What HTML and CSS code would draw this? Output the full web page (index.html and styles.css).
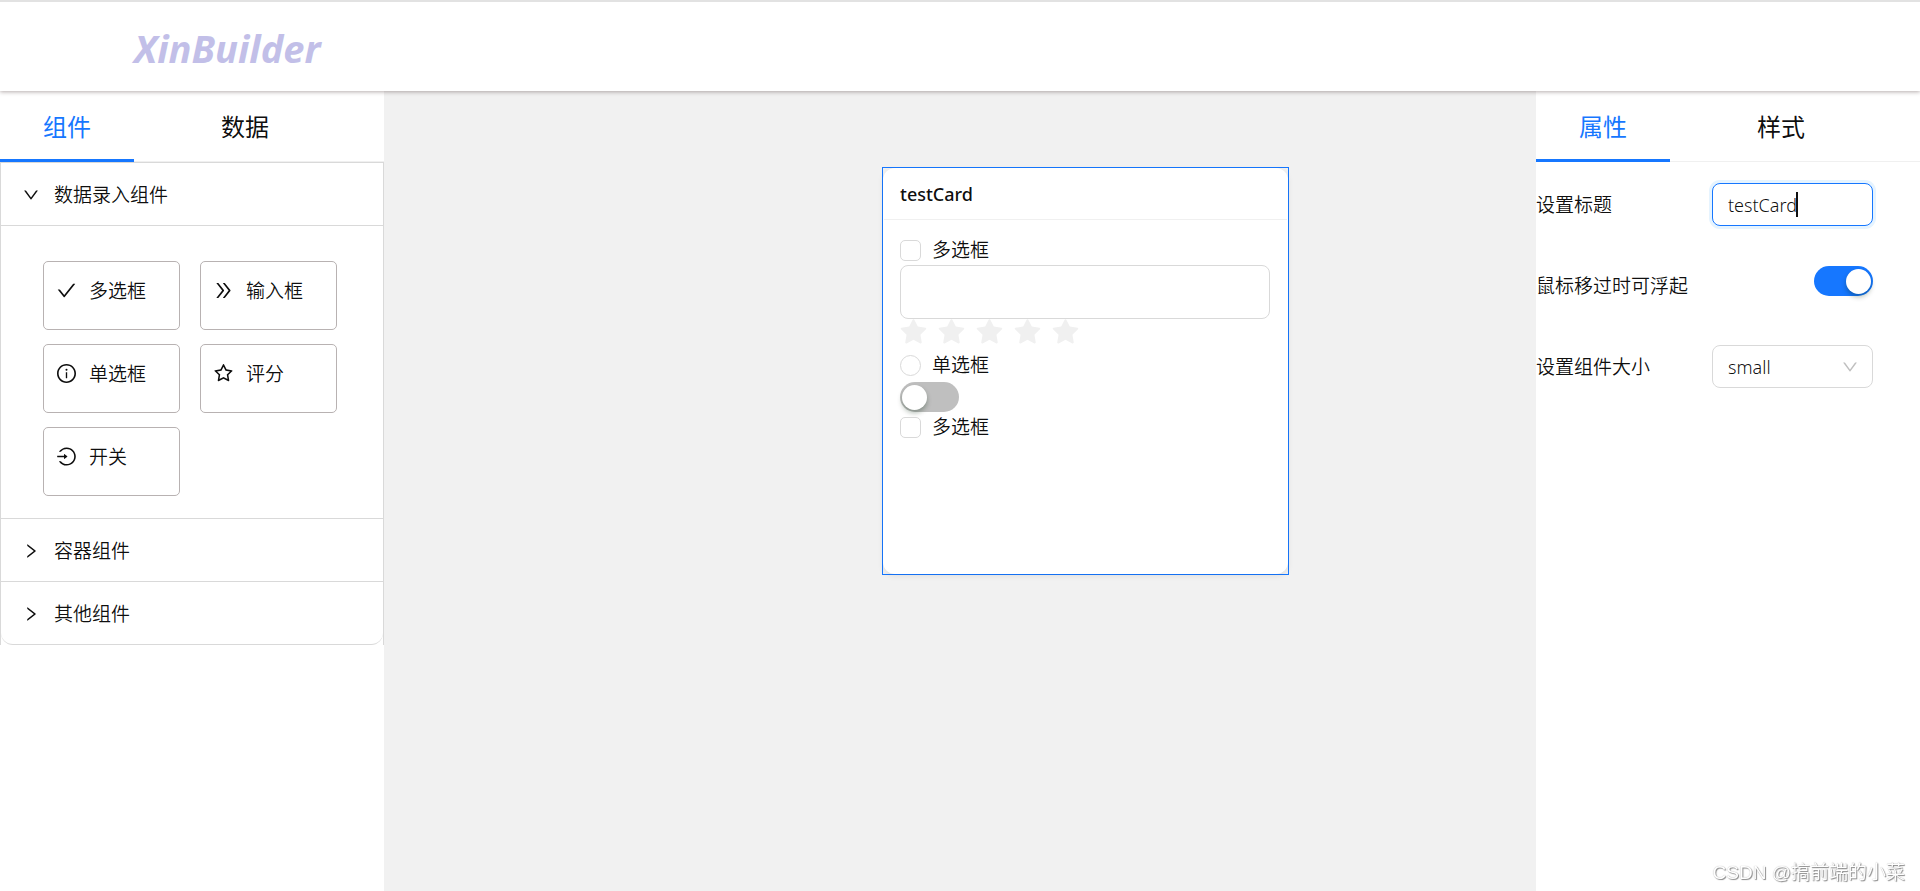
FILE: index.html
```html
<!DOCTYPE html>
<html lang="zh-CN">
<head>
<meta charset="utf-8">
<title>XinBuilder</title>
<link rel="stylesheet" href="styles.css">
</head>
<body>
<svg class="sprite" aria-hidden="true">
  <symbol id="i-check" viewBox="64 64 896 896"><path d="M912 190h-69.9c-9.8 0-19.1 4.5-25.1 12.2L404.7 724.5 207 474a32 32 0 00-25.1-12.2H112c-6.7 0-10.4 7.7-6.3 12.9l273.9 347c12.8 16.2 37.4 16.2 50.3 0l488.4-618.9c4.1-5.1.4-12.8-6.3-12.8z"/></symbol>
  <symbol id="i-double-right" viewBox="64 64 896 896"><path d="M533.2 492.3L277.9 166.1c-3-3.9-7.7-6.1-12.6-6.1H188c-6.7 0-10.4 7.7-6.3 12.9L447.1 512 181.7 851.1A7.98 7.98 0 00188 864h77.3c4.9 0 9.6-2.3 12.6-6.1l255.3-326.1c9.1-11.7 9.1-27.9 0-39.5zm304 0L581.9 166.1c-3-3.9-7.7-6.1-12.6-6.1H492c-6.7 0-10.4 7.7-6.3 12.9L751.1 512 485.7 851.1A7.98 7.98 0 00492 864h77.3c4.9 0 9.6-2.3 12.6-6.1l255.3-326.1c9.1-11.7 9.1-27.9 0-39.5z"/></symbol>
  <symbol id="i-info" viewBox="64 64 896 896"><path d="M512 64C264.6 64 64 264.6 64 512s200.6 448 448 448 448-200.6 448-448S759.4 64 512 64zm0 820c-205.4 0-372-166.6-372-372s166.6-372 372-372 372 166.6 372 372-166.6 372-372 372z"/><path d="M464 336a48 48 0 1096 0 48 48 0 10-96 0zm72 112h-48c-4.4 0-8 3.6-8 8v272c0 4.4 3.6 8 8 8h48c4.4 0 8-3.6 8-8V456c0-4.4-3.6-8-8-8z"/></symbol>
  <symbol id="i-star" viewBox="64 64 896 896"><path d="M908.1 353.1l-253.9-36.9L540.7 86.1c-3.1-6.3-8.2-11.4-14.5-14.5-15.8-7.8-35-1.3-42.9 14.5L369.8 316.2l-253.9 36.9c-7 1-13.4 4.3-18.3 9.3a32.05 32.05 0 00.6 45.3l183.7 179.1-43.4 252.9a31.95 31.95 0 0046.4 33.7L512 754l227.1 119.4c6.2 3.3 13.4 4.4 20.3 3.2 17.4-3 29.1-19.5 26.1-36.9l-43.4-252.9 183.7-179.1c5-4.9 8.3-11.3 9.3-18.3 2.7-17.5-9.5-33.7-27-36.3zM664.8 561.6l36.1 210.3L512 672.7 323.1 772l36.1-210.3-152.8-149L417.6 382 512 190.7 606.4 382l211.2 30.7-152.8 148.9z"/></symbol>
  <symbol id="i-star-filled" viewBox="64 64 896 896"><path d="M908.1 353.1l-253.9-36.9L540.7 86.1c-3.1-6.3-8.2-11.4-14.5-14.5-15.8-7.8-35-1.3-42.9 14.5L369.8 316.2l-253.9 36.9c-7 1-13.4 4.3-18.3 9.3a32.05 32.05 0 00.6 45.3l183.7 179.1-43.4 252.9a31.95 31.95 0 0046.4 33.7L512 754l227.1 119.4c6.2 3.3 13.4 4.4 20.3 3.2 17.4-3 29.1-19.5 26.1-36.9l-43.4-252.9 183.7-179.1c5-4.9 8.3-11.3 9.3-18.3 2.7-17.5-9.5-33.7-27-36.3z"/></symbol>
  <symbol id="i-login" viewBox="64 64 896 896"><path d="M521.7 82c-152.5-.4-286.7 78.5-363.4 197.7-3.4 5.3.4 12.3 6.7 12.3h70.3c4.8 0 9.3-2.1 12.3-5.8 7-8.5 14.5-16.7 22.4-24.5 32.6-32.5 70.5-58.1 112.7-75.9 43.6-18.4 90-27.8 137.9-27.8 47.9 0 94.3 9.3 137.9 27.8 42.2 17.8 80.1 43.4 112.7 75.9 32.6 32.5 58.1 70.4 76 112.5C865.7 417.8 875 464.1 875 512c0 47.9-9.4 94.2-27.8 137.8-17.8 42.1-43.4 80-76 112.5s-70.5 58.1-112.7 75.9A352.8 352.8 0 01520.6 866c-47.9 0-94.3-9.4-137.9-27.8A353.84 353.84 0 01270 762.3c-7.9-7.9-15.3-16.1-22.4-24.5-3-3.7-7.6-5.8-12.3-5.8H165c-6.3 0-10.2 7-6.7 12.3C234.9 863.2 368.5 942 520.6 942c236.2 0 428-190.1 430.4-425.6C953.4 277.1 761.3 82.6 521.7 82zM395.02 624v-76h-314c-4.4 0-8-3.6-8-8v-56c0-4.4 3.6-8 8-8h314v-76c0-6.7 7.8-10.5 13-6.3l141.9 112a8 8 0 010 12.6l-141.9 112c-5.2 4.1-13 .3-13-6.3z"/></symbol>
  <symbol id="i-down" viewBox="64 64 896 896"><path d="M884 256h-75c-5.1 0-9.9 2.5-12.9 6.6L512 654.2 227.9 262.6c-3-4.1-7.8-6.6-12.9-6.6h-75c-6.5 0-10.3 7.4-6.5 12.7l352.6 486.1c12.8 17.6 39 17.6 51.7 0l352.6-486.1c3.9-5.3.1-12.7-6.4-12.7z"/></symbol>
  <symbol id="i-right" viewBox="64 64 896 896"><path d="M765.7 486.8L314.9 134.7A7.97 7.97 0 00302 141v77.3c0 4.9 2.3 9.6 6.1 12.6l360 281.1-360 281.1c-3.9 3-6.1 7.7-6.1 12.6V883c0 6.7 7.7 10.4 12.9 6.3l450.8-352.1a31.96 31.96 0 000-50.4z"/></symbol>
</svg>

<header class="topbar"><h1 class="logo">XinBuilder</h1></header>

<div class="workspace">
  <aside class="panel">
    <nav class="tabs">
      <button class="tab tab-active" type="button">组件</button>
      <button class="tab" type="button">数据</button>
    </nav>
    <div class="collapse">
      <section class="group">
        <button class="group-head" type="button"><svg class="chevron"><use href="#i-down"/></svg>数据录入组件</button>
        <div class="palette">
          <button class="item" type="button"><svg class="icon"><use href="#i-check"/></svg>多选框</button>
          <button class="item" type="button"><svg class="icon"><use href="#i-double-right"/></svg>输入框</button>
          <button class="item" type="button"><svg class="icon"><use href="#i-info"/></svg>单选框</button>
          <button class="item" type="button"><svg class="icon"><use href="#i-star"/></svg>评分</button>
          <button class="item" type="button"><svg class="icon"><use href="#i-login"/></svg>开关</button>
        </div>
      </section>
      <section class="group">
        <button class="group-head" type="button"><svg class="chevron"><use href="#i-right"/></svg>容器组件</button>
      </section>
      <section class="group">
        <button class="group-head" type="button"><svg class="chevron"><use href="#i-right"/></svg>其他组件</button>
      </section>
    </div>
  </aside>

  <main class="canvas">
    <div class="selection">
      <article class="card">
        <h2 class="card-title">testCard</h2>
        <div class="card-body">
          <label class="choice"><input class="box" type="checkbox">多选框</label>
          <input class="text-input" type="text" aria-label="输入框">
          <div class="rate">
            <button class="star" type="button" aria-label="1"><svg><use href="#i-star-filled"/></svg></button>
            <button class="star" type="button" aria-label="2"><svg><use href="#i-star-filled"/></svg></button>
            <button class="star" type="button" aria-label="3"><svg><use href="#i-star-filled"/></svg></button>
            <button class="star" type="button" aria-label="4"><svg><use href="#i-star-filled"/></svg></button>
            <button class="star" type="button" aria-label="5"><svg><use href="#i-star-filled"/></svg></button>
          </div>
          <label class="choice"><input class="box box-round" type="radio">单选框</label>
          <input class="switch" type="checkbox" role="switch" aria-label="开关">
          <label class="choice"><input class="box" type="checkbox">多选框</label>
        </div>
      </article>
    </div>
  </main>

  <aside class="panel">
    <nav class="tabs">
      <button class="tab tab-active" type="button">属性</button>
      <button class="tab" type="button">样式</button>
    </nav>
    <form class="props">
      <div class="prop">
        <label for="title">设置标题</label>
        <span class="field field-focus"><input class="control" id="title" type="text" value="testCard"></span>
      </div>
      <div class="prop">
        <label for="hover">鼠标移过时可浮起</label>
        <span class="field-switch"><input class="switch" id="hover" type="checkbox" role="switch" checked></span>
      </div>
      <div class="prop">
        <label for="size">设置组件大小</label>
        <span class="field"><select class="control" id="size"><option>small</option><option>default</option></select><svg class="arrow"><use href="#i-down"/></svg></span>
      </div>
    </form>
  </aside>
</div>
<div class="watermark">CSDN @搞前端的小菜</div>
</body>
</html>
```
FILE: styles.css
```css
* { box-sizing: border-box; }

body {
  margin: 0;
  min-height: 100vh;
  display: flex;
  flex-direction: column;
  background: #fff;
  color: rgba(0, 0, 0, 0.95);
  font: 350 19px/30px "Noto Sans", "Noto Sans CJK SC", sans-serif;
}

button, input, select { font: inherit; color: inherit; }
button { border: 0; background: none; padding: 0; cursor: pointer; text-align: left; }
svg { fill: currentColor; display: block; flex: none; }
.sprite { position: absolute; width: 0; height: 0; }

.topbar {
  position: relative;
  z-index: 1;
  height: 91px;
  display: flex;
  align-items: center;
  padding: 3px 134px 0;
  border-top: 2px solid #e2e2e2;
  background: #fff;
  box-shadow: 0 1px 4px rgba(90, 70, 70, 0.45);
}
.logo {
  margin: 0;
  color: #c2bfe8;
  font: italic 700 38px/56px "Noto Sans", sans-serif;
}

.workspace {
  flex: 1;
  display: grid;
  grid-template-columns: 1fr 3fr 1fr;
  background: #f1f1f1;
}
.panel { background: #fff; min-width: 0; }

.tabs { display: flex; gap: 44px; height: 71px; border-bottom: 1px solid #f0f0f0; }
.tab { height: 71px; padding: 4px 43px 0; font-size: 24px; font-weight: 400; border-bottom: 3px solid transparent; }
.tab-active { color: #1677ff; border-bottom-color: #1677ff; }

.collapse { border: 1px solid #d9d9d9; border-bottom: 0; }
.group { border-bottom: 1px solid #d9d9d9; }
.group:last-child { border-radius: 0 0 12px 12px; }
.group-head {
  display: flex;
  align-items: center;
  gap: 15px;
  width: 100%;
  height: 62px;
  padding: 1px 22px 0;
}
.chevron { width: 16px; height: 16px; }
.palette {
  display: grid;
  grid-template-columns: 137px 137px;
  gap: 14px 20px;
  padding: 35px 42px 22px;
  border-top: 1px solid #d9d9d9;
}
.item {
  display: flex;
  align-items: flex-start;
  gap: 13px;
  height: 69px;
  padding: 14px 13px;
  border: 1px solid #b8b2b2;
  border-radius: 5px;
}
.icon { width: 19px; height: 19px; margin-top: 5px; }

.canvas {
  display: flex;
  justify-content: center;
  align-items: flex-start;
  padding: 76px 0 0 251px;
}
.selection { width: 407px; height: 408px; border: 1px solid #1677ff; }
.card {
  height: 100%;
  padding: 0 1px;
  border-radius: 12px;
  background: #fff;
  box-shadow: 0 2px 6px rgba(0, 0, 0, 0.08);
}
.card-title {
  margin: 0;
  padding: 11px 16px 10px;
  font-size: 18px;
  font-weight: 500;
  line-height: 30px;
  border-bottom: 1px solid #f0f0f0;
}
.card-body { padding: 15px 17px 16px 16px; display: flex; flex-direction: column; align-items: flex-start; }
.choice { display: flex; align-items: center; gap: 11px; height: 30px; }
.box {
  appearance: none;
  width: 21px;
  height: 21px;
  margin: 0;
  border: 1px solid #d9d9d9;
  border-radius: 5px;
  background: #fff;
}
.box-round { border-radius: 50%; }
.text-input { width: 100%; height: 54px; padding: 0 16px; border: 1px solid #d9d9d9; border-radius: 8px; background: #fff; }
.rate { display: flex; gap: 11px; height: 31px; color: #f0f0f0; }
.star, .star svg { width: 27px; height: 27px; }

.switch {
  appearance: none;
  display: flex;
  justify-content: flex-start;
  align-items: center;
  width: 59px;
  height: 30px;
  margin: 0;
  padding: 0 2px;
  border-radius: 15px;
  background: #bfbfbf;
}
.card-body .switch { margin-top: 2px; }
.switch::before {
  content: "";
  width: 25px;
  height: 25px;
  border-radius: 50%;
  background: #fff;
  box-shadow: 0 3px 5px rgba(0, 35, 11, 0.3);
}
.switch:checked { justify-content: flex-end; background: #1677ff; }

.props { display: grid; gap: 38px; padding: 21px 47px 0 0; }
.prop { display: flex; justify-content: space-between; align-items: center; height: 43px; }
.field { position: relative; width: 161px; }
.field-switch { align-self: flex-start; padding-top: 2px; }
.control {
  appearance: none;
  display: block;
  width: 100%;
  height: 43px;
  padding: 0 15px;
  border: 1px solid #d9d9d9;
  border-radius: 8px;
  background: #fff;
  font-size: 18px;
  outline: 0;
}
.field-focus .control { border-color: #1677ff; box-shadow: 0 0 0 3px #e6f4ff; }
.field-focus::after {
  content: "";
  position: absolute;
  left: 84px;
  top: 9px;
  width: 2px;
  height: 25px;
  background: #111;
}
.arrow { position: absolute; right: 15px; top: 14px; width: 16px; height: 16px; color: #bfbfbf; pointer-events: none; }

.watermark {
  position: fixed;
  right: 15px;
  bottom: 3px;
  color: #fff;
  font: 350 19px/30px "Liberation Sans", "Noto Sans CJK SC", sans-serif;
  text-shadow: 1px 1px 1px #888, 0 0 1px #aaa;
}
```
